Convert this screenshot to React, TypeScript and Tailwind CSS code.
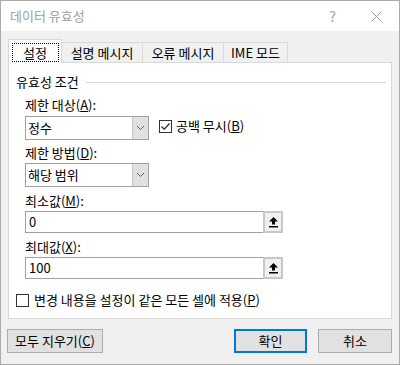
import React from 'react';

const font = { fontFamily: '"Noto Sans CJK KR", "Noto Sans", sans-serif' };

function Chevron() {
  return (
    <svg width="9" height="6" viewBox="0 0 9 6">
      <path d="M1 1 L4.5 4.5 L8 1" fill="none" stroke="#606060" strokeWidth="1" />
    </svg>
  );
}

function CollapseIcon() {
  return (
    <svg width="11" height="12" viewBox="0 0 11 12">
      <path d="M5.5 1 L10 5.5 L7 5.5 L7 8.5 L4 8.5 L4 5.5 L1 5.5 Z" fill="#000" />
      <rect x="1" y="10" width="9" height="1.5" fill="#000" />
    </svg>
  );
}

function Check({ checked }: { checked?: boolean }) {
  return (
    <div className="flex h-[13px] w-[13px] shrink-0 items-center justify-center border border-[#333] bg-white">
      {checked && (
        <svg width="11" height="11" viewBox="0 0 11 11">
          <path d="M1.5 5.5 L4.2 8.2 L9.5 2.5" fill="none" stroke="#222" strokeWidth="1.2" />
        </svg>
      )}
    </div>
  );
}

function Select({ value }: { value: string }) {
  return (
    <div className="flex h-[24px] w-[124px] border border-[#a0a0a0] bg-white">
      <div className="flex flex-1 items-center pl-[2px] leading-4">{value}</div>
      <div className="flex w-[16px] items-center justify-center border-l border-[#c4c4c4] bg-[#e1e1e1]">
        <Chevron />
      </div>
    </div>
  );
}

function RangeInput({ value }: { value: string }) {
  return (
    <div className="flex h-[22px] w-[258px] border border-[#a0a0a0] bg-white">
      <div className="flex flex-1 items-center pl-[3px] leading-4">{value}</div>
      <div className="flex w-[20px] items-center justify-center border-2 border-[#c8c8c8] bg-[#f0f0f0] -my-px -mr-px">
        <CollapseIcon />
      </div>
    </div>
  );
}

function Label({ text, k, className }: { text: string; k: string; className?: string }) {
  return (
    <div className={`h-4 leading-4 ${className ?? ''}`}>
      {text}(<u>{k}</u>):
    </div>
  );
}

export default function App() {
  return (
    <div
      className="flex h-[365px] w-[400px] flex-col border border-[#aaaaaa] bg-[#f0f0f0] text-[13px] text-black"
      style={font}
    >
      {/* Title bar */}
      <div className="flex h-[30px] shrink-0 items-center bg-white pl-[9px] text-[13px] text-[#a0a0a0]">
        <span>데이터 유효성</span>
        <span className="ml-auto mr-[35px] text-[14px]">?</span>
        <svg width="11" height="11" viewBox="0 0 11 11" className="mr-[17px]">
          <path d="M0.5 0.5 L10.5 10.5 M10.5 0.5 L0.5 10.5" stroke="#999" strokeWidth="1" />
        </svg>
      </div>

      {/* Tabs */}
      <div className="flex h-[24px] items-end pl-[7px] mt-[8px]">
        <div className="relative z-10 flex h-[24px] w-[54px] items-start justify-center border border-b-0 border-[#d9d9d9] bg-white pt-[3px]">
          <span className="flex h-[19px] w-[47px] items-center justify-center border border-dotted border-black">설정</span>
        </div>
        <div className="flex h-[21px] w-[81px] items-center justify-center border border-l-0 border-[#d9d9d9]">설명 메시지</div>
        <div className="flex h-[21px] w-[81px] items-center justify-center border border-l-0 border-[#d9d9d9]">오류 메시지</div>
        <div className="flex h-[21px] w-[64px] items-center justify-center border border-l-0 border-[#d9d9d9]">IME 모드</div>
      </div>

      {/* Panel */}
      <div className="mx-[7px] -mt-px h-[257px] w-[384px] border border-[#d9d9d9] bg-white pl-[7px] pr-[5px] pt-[11px]">
        <div className="flex h-4 items-center leading-4">
          <span>유효성 조건</span>
          <div className="ml-[7px] h-px flex-1 bg-[#dcdcdc]" />
        </div>

        <div className="pl-[9px]">
          <Label text="제한 대상" k="A" className="mt-[7px]" />
          <div className="mt-[3px] flex items-start">
            <Select value="정수" />
            <div className="ml-[10px] mt-[2px] flex items-center">
              <Check checked />
              <span className="ml-[4px] leading-4">
                공백 무시(<u>B</u>)
              </span>
            </div>
          </div>

          <Label text="제한 방법" k="D" className="mt-[5px]" />
          <div className="mt-[2px]">
            <Select value="해당 범위" />
          </div>

          <Label text="최소값" k="M" className="mt-[6px]" />
          <div className="mt-[2px]">
            <RangeInput value="0" />
          </div>

          <Label text="최대값" k="X" className="mt-[6px]" />
          <div className="mt-[2px]">
            <RangeInput value="100" />
          </div>
        </div>

        <div className="mt-[13px] flex items-center">
          <Check />
          <span className="ml-[5px] leading-4">
            변경 내용을 설정이 같은 모든 셀에 적용(<u>P</u>)
          </span>
        </div>
      </div>

      {/* Buttons */}
      <div className="mt-[10px] flex pl-[6px] pr-[7px]">
        <button className="flex h-[24px] w-[96px] items-center justify-center border border-[#adadad] bg-[#e1e1e1]">
          모두 지우기(<u>C</u>)
        </button>
        <button className="ml-auto flex h-[24px] w-[73px] items-center justify-center border-2 border-[#0078d7] bg-[#e1e1e1]">
          확인
        </button>
        <button className="ml-[11px] flex h-[24px] w-[74px] items-center justify-center border border-[#adadad] bg-[#e1e1e1]">
          취소
        </button>
      </div>
    </div>
  );
}
